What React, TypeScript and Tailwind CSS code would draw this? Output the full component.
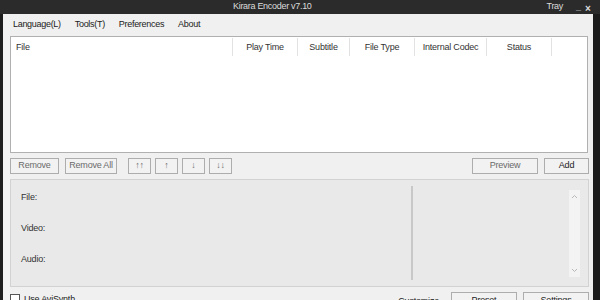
import React from "react";

const font = { fontFamily: '"Liberation Sans", Arial, sans-serif' };

function Btn({ label, className = "", dark = false }: { label: string; className?: string; dark?: boolean }) {
  return (
    <div
      className={`h-[16px] border border-[#adadad] bg-[#f2f2f2] flex items-center justify-center text-[9px] tracking-[-0.2px] ${dark ? "text-[#222]" : "text-[#6a6a6a]"} ${className}`}
    >
      {label}
    </div>
  );
}

const cols = [
  { label: "File", w: "w-[222px]", left: true },
  { label: "Play Time", w: "w-[65px]" },
  { label: "Subtitle", w: "w-[52px]" },
  { label: "File Type", w: "w-[65px]" },
  { label: "Internal Codec", w: "w-[72px]" },
  { label: "Status", w: "w-[65px]" },
];

export default function App() {
  return (
    <div className="relative w-[600px] h-[300px] overflow-hidden bg-[#1c1c1c] flex flex-col text-[#222]" style={font}>
      {/* title bar */}
      <div className="h-[14px] bg-[#2b2b2b] flex items-center text-[9px] tracking-[-0.3px] text-[#dcdcdc]">
        <div className="ml-[233px]">Kirara Encoder v7.10</div>
        <div className="ml-auto mr-[37px]">Tray</div>
        <div className="absolute left-[576px] top-[1px] text-[9px] font-bold">_</div>
        <div className="absolute left-[585px] top-[1px] text-[10px] font-bold">×</div>
      </div>
      {/* body */}
      <div className="flex-1 ml-[3px] mr-[7px] bg-[#f0f0f0] flex flex-col pl-[7px] pr-[2px]">
        {/* menu */}
        <div className="h-[20px] pt-[3px] flex items-center text-[9px] tracking-[-0.3px] text-[#222] -ml-[7px]">
          <span className="ml-[10px]">Language(L)</span>
          <span className="ml-[14px]">Tools(T)</span>
          <span className="ml-[14px]">Preferences</span>
          <span className="ml-[14px]">About</span>
        </div>
        {/* list */}
        <div className="mt-[2px] h-[117px] w-[578px] border border-[#b0b0b0] bg-white">
          <div className="h-[20px] flex text-[9px] tracking-[-0.2px] text-[#333]">
            {cols.map((c, i) => (
              <div
                key={i}
                className={`${c.w} h-[18px] mt-[1px] pt-[2px] flex items-center border-r border-[#e2e2e2] ${c.left ? "pl-[5px]" : "justify-center"}`}
              >
                {c.label}
              </div>
            ))}
          </div>
        </div>
        {/* buttons */}
        <div className="mt-[5px] h-[16px] flex w-[579px]">
          <Btn label="Remove" className="w-[49px]" />
          <Btn label="Remove All" className="w-[52px] ml-[6px]" />
          <Btn label="↑↑" className="w-[23px] ml-[11px]" />
          <Btn label="↑" className="w-[23px] ml-[4px]" />
          <Btn label="↓" className="w-[23px] ml-[4px]" />
          <Btn label="↓↓" className="w-[23px] ml-[4px]" />
          <Btn label="Preview" className="w-[66px] ml-auto" />
          <Btn label="Add" className="w-[45px] ml-[6px]" dark />
        </div>
        {/* info panel */}
        <div className="mt-[5px] h-[108px] w-[579px] border border-[#d2d2d2] bg-[#e9e9e9] flex">
          <div className="w-[400px] flex flex-col pl-[10px] pt-[11px] text-[9px] tracking-[-0.2px] text-[#333]">
            <div className="h-[31px]">File:</div>
            <div className="h-[31px]">Video:</div>
            <div className="h-[31px]">Audio:</div>
          </div>
          <div className="w-[2px] mt-[6px] h-[94px] bg-[#c8c8c8]" />
          <div className="flex-1 flex justify-end pr-[8px]">
            <div className="mt-[10px] w-[11px] h-[87px] bg-[#f3f3f3] flex flex-col items-center justify-between py-[4px]">
              <svg width="7" height="5" viewBox="0 0 7 5">
                <path d="M1 4 L3.5 1.5 L6 4" fill="none" stroke="#b8b8b8" strokeWidth="1" />
              </svg>
              <svg width="7" height="5" viewBox="0 0 7 5">
                <path d="M1 1 L3.5 3.5 L6 1" fill="none" stroke="#b8b8b8" strokeWidth="1" />
              </svg>
            </div>
          </div>
        </div>
        {/* bottom row */}
        <div className="mt-[5px] flex items-start w-[579px]">
          <div className="mt-[2px] w-[10px] h-[10px] border border-[#555] bg-white" />
          <div className="ml-[4px] mt-[1px] text-[9px] tracking-[-0.2px] text-[#222]">Use AviSynth</div>
          <div className="ml-auto mt-[3px] text-[9px] tracking-[-0.2px] text-[#222]">Customize</div>
          <Btn label="Preset" className="w-[66px] ml-[12px] h-[18px]" dark />
          <Btn label="Settings" className="w-[66px] ml-[6px] h-[18px]" dark />
        </div>
      </div>
    </div>
  );
}
